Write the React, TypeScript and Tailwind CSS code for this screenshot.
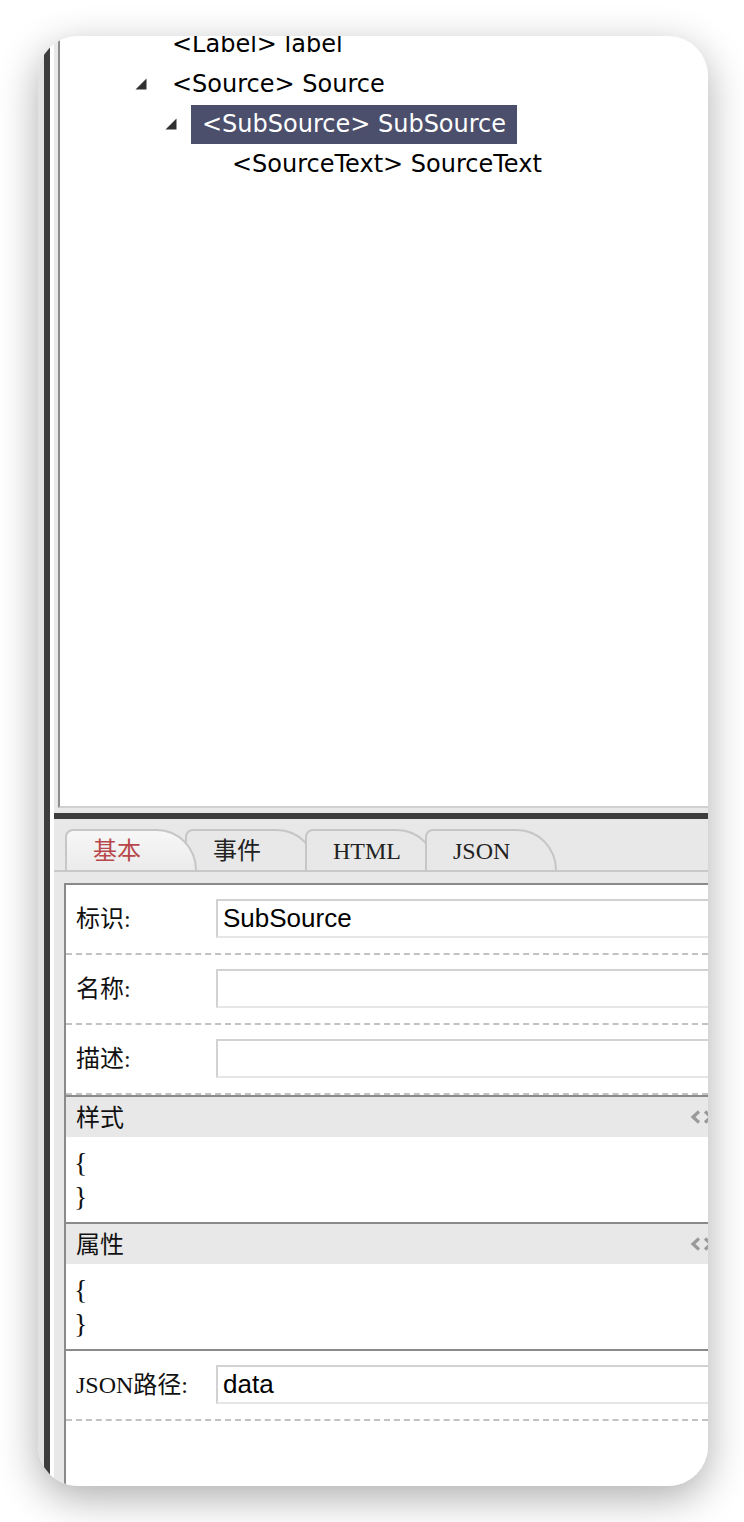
import React from 'react';

type TreeRow = {
  text: string;
  pl: number;
  toggle?: boolean;
  selected?: boolean;
};

const treeRows: TreeRow[] = [
  { text: '<Label> label', pl: 101 },
  { text: '<Source> Source', pl: 75, toggle: true },
  { text: '<SubSource> SubSource', pl: 105, toggle: true, selected: true },
  { text: '<SourceText> SourceText', pl: 161 },
];

const tabs = ['基本', '事件', 'HTML', 'JSON'];

const Triangle: React.FC = () => (
  <svg width="12" height="12" viewBox="0 0 12 12" className="shrink-0">
    <polygon points="11.5,0.5 11.5,11.5 0.5,11.5" fill="#303030" />
  </svg>
);

const CodeIcon: React.FC = () => (
  <div className="w-[18px] overflow-hidden shrink-0">
    <svg width="26" height="14" viewBox="0 0 26 14">
      <polyline points="9,1.5 3,7 9,12.5" fill="none" stroke="#9a9a9a" strokeWidth="3.2" />
      <polyline points="15,1.5 21,7 15,12.5" fill="none" stroke="#9a9a9a" strokeWidth="3.2" />
    </svg>
  </div>
);

const Field: React.FC<{ label: string; value?: string }> = ({ label, value }) => (
  <div className="flex items-start pt-[14px] pb-[15px] border-b-2 border-dashed border-[#c2c2c2]">
    <div className="w-[150px] h-[39px] flex items-center pl-[10px] text-[24px] text-[#111] font-['Liberation_Serif','Noto_Sans_CJK_SC',serif]">
      {label}
    </div>
    <div className="flex-1 h-[39px] border-2 border-r-0 border-[#d2d2d2] border-b-[#e6e6e6] bg-white flex items-center pl-[5px] text-[26px] text-black font-['Liberation_Sans',sans-serif]">
      {value}
    </div>
  </div>
);

const Section: React.FC<{ title: string; last?: boolean }> = ({ title, last }) => (
  <div className={`border-t-2 border-[#8a8a8a] ${last ? 'border-b-2' : ''}`}>
    <div className="h-[40px] bg-[#e8e8e8] flex items-center pl-[10px] text-[24px] text-[#111] font-['Liberation_Serif','Noto_Sans_CJK_SC',serif]">
      <span className="pt-[2px]">{title}</span>
      <div className="ml-auto">
        <CodeIcon />
      </div>
    </div>
    <div className="h-[85px] pt-[9px] pl-[8px] text-[28px] leading-[34px] text-[#111] font-['Liberation_Serif',serif]">
      <div>{'{'}</div>
      <div>{'}'}</div>
    </div>
  </div>
);

const App: React.FC = () => {
  return (
    <div className="w-[744px] h-[1522px] bg-white pt-[36px] pl-[38px]">
      <div className="w-[670px] h-[1450px] rounded-[40px] overflow-hidden bg-white shadow-[0_12px_40px_rgba(0,0,0,0.32)] flex">
        <div className="w-[6px] bg-[#e2e2e2] shrink-0" />
        <div className="w-[6px] bg-[#3d3d3d] shrink-0" />
        <div className="flex-1 flex flex-col border-l-4 border-white min-w-0">
          {/* tree panel */}
          <div className="h-[777px] bg-[#e8e8e8] pl-[4px] pb-[5px] flex flex-col shrink-0">
            <div className="flex-1 bg-white border-l-2 border-[#8c8c8c] border-b-2 border-b-[#d0d0d0] overflow-hidden">
              <div className="mt-[-12px] font-['DejaVu_Sans',sans-serif] text-[24px] text-black">
                {treeRows.map((row) => (
                  <div key={row.text} className="h-[40px] flex items-center" style={{ paddingLeft: row.pl }}>
                    {row.toggle && (
                      <div className="mr-[14px]">
                        <Triangle />
                      </div>
                    )}
                    <div
                      className={`h-[39px] px-[11px] flex items-center whitespace-nowrap ${
                        row.selected ? 'bg-[#4b4f6c] text-white' : ''
                      }`}
                    >
                      {row.text}
                    </div>
                  </div>
                ))}
              </div>
            </div>
          </div>

          {/* splitter */}
          <div className="h-[6px] bg-[#3d3d3d] shrink-0" />

          {/* properties panel */}
          <div className="flex-1 bg-[#e8e8e8] flex flex-col min-h-0">
            <div className="pt-[10px] pl-[11px] border-b-2 border-[#c8c8c8] flex">
              {tabs.map((tab, i) => (
                <div
                  key={tab}
                  className={`relative w-[132px] h-[41px] border-2 border-b-0 border-[#c6c6c6] rounded-tl-[8px] rounded-tr-[40px_41px] flex items-center pl-[26px] pt-[1px] text-[24px] font-['Liberation_Serif','Noto_Sans_CJK_SC',serif] ${
                    i > 0 ? 'ml-[-12px]' : ''
                  } ${
                    i === 0
                      ? 'z-10 bg-[linear-gradient(#f7f7f7,#ebebeb)] text-[#b8474b]'
                      : 'bg-[#e8e8e8] text-[#222]'
                  }`}
                >
                  {tab}
                </div>
              ))}
            </div>

            <div className="flex-1 pt-[11px] pl-[10px] flex flex-col">
              <div className="flex-1 bg-white border-t-2 border-l-2 border-[#8a8a8a]">
                <Field label="标识:" value="SubSource" />
                <Field label="名称:" />
                <Field label="描述:" />
                <Section title="样式" />
                <Section title="属性" last />
                <Field label="JSON路径:" value="data" />
              </div>
            </div>
          </div>
        </div>
      </div>
    </div>
  );
};

export default App;
